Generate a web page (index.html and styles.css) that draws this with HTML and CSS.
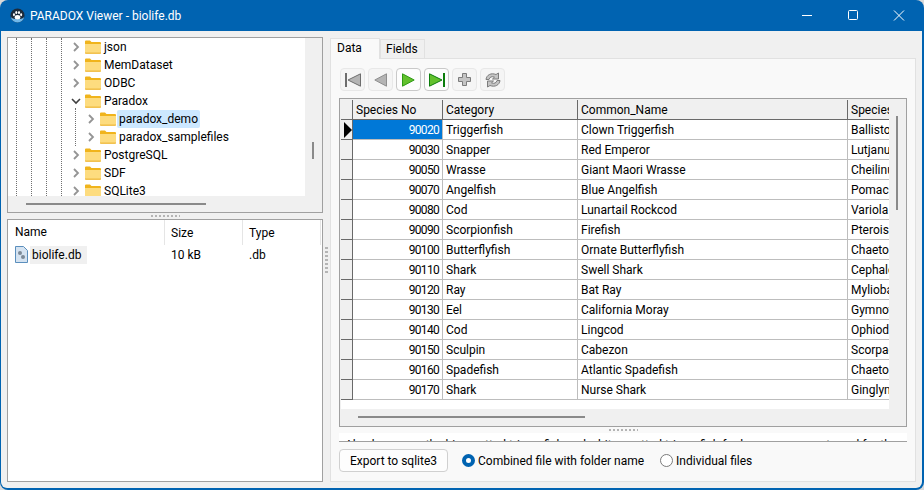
FILE: index.html
```html
<!DOCTYPE html>
<html>
<head>
<meta charset="utf-8">
<title>PARADOX Viewer - biolife.db</title>
<link rel="stylesheet" href="styles.css">
</head>
<body>
<svg class="defs" width="0" height="0">
	<symbol id="folder" viewBox="0 0 16 14">
		<path d="M0 1.500a1 1 0 0 1 1-1h4l1.500 1.500H15a1 1 0 0 1 1 1v9.500a1 1 0 0 1-1 1H1a1 1 0 0 1-1-1z" fill="#f0b41c"/>
		<path d="M0 4h16v8.500a1 1 0 0 1-1 1H1a1 1 0 0 1-1-1z" fill="#fddc7f"/>
		<path d="M0 12.500h16v.2a1 1 0 0 1-1 1H1a1 1 0 0 1-1-1z" fill="#efbb42"/>
	</symbol>
	<symbol id="right" viewBox="0 0 8 12"><path d="M2 2l4 4-4 4" fill="none" stroke="#949494" stroke-width="1.800"/></symbol>
	<symbol id="down" viewBox="0 0 10 12"><path d="M1 4l4 4 4-4" fill="none" stroke="#404040" stroke-width="1.600"/></symbol>
</svg>
<div class="window">
	<div class="titlebar">
		<svg class="appicon" width="15" height="15" viewBox="0 0 16 16">
			<circle cx="8" cy="8" r="7.500" fill="#1c2a3a"/>
			<path d="M1 9a7 6.500 0 0 0 14 0a7 3 0 0 1-14 0" fill="#6fb7ea"/>
			<ellipse cx="8" cy="9.800" rx="3" ry="2.400" fill="#fff"/>
			<ellipse cx="4.200" cy="7.200" rx="1.100" ry="1.500" fill="#fff"/>
			<ellipse cx="6.700" cy="4.900" rx="1.100" ry="1.600" fill="#fff"/>
			<ellipse cx="9.600" cy="4.900" rx="1.100" ry="1.600" fill="#fff"/>
			<ellipse cx="11.900" cy="7.200" rx="1.100" ry="1.500" fill="#fff"/>
		</svg>
		<span class="title">PARADOX Viewer - biolife.db</span>
		<div class="caption">
			<svg width="46" height="31" viewBox="0 0 46 31"><path d="M18 15.500h10" stroke="#fff"/></svg>
			<svg width="46" height="31" viewBox="0 0 46 31"><rect x="18.500" y="10.500" width="9" height="9" rx="1" fill="none" stroke="#fff"/></svg>
			<svg width="46" height="31" viewBox="0 0 46 31"><path d="M18 10.500l10 10M28 10.500l-10 10" stroke="#fff"/></svg>
		</div>
	</div>
	<div class="client">
		<div class="leftside">
			<div class="treebox">
				<div class="treeview">
					<div class="guides"><i></i><i></i><i></i><i></i><i></i></div>
					<div class="node"><svg class="chev"><use href="#right"/></svg><svg class="folder"><use href="#folder"/></svg><span>json</span></div>
					<div class="node"><svg class="chev"><use href="#right"/></svg><svg class="folder"><use href="#folder"/></svg><span>MemDataset</span></div>
					<div class="node"><svg class="chev"><use href="#right"/></svg><svg class="folder"><use href="#folder"/></svg><span>ODBC</span></div>
					<div class="node"><svg class="chev"><use href="#down"/></svg><svg class="folder"><use href="#folder"/></svg><span>Paradox</span></div>
					<div class="node sub"><svg class="chev"><use href="#right"/></svg><svg class="folder"><use href="#folder"/></svg><span class="picked">paradox_demo</span></div>
					<div class="node sub"><svg class="chev"><use href="#right"/></svg><svg class="folder"><use href="#folder"/></svg><span>paradox_samplefiles</span></div>
					<div class="node"><svg class="chev"><use href="#right"/></svg><svg class="folder"><use href="#folder"/></svg><span>PostgreSQL</span></div>
					<div class="node"><svg class="chev"><use href="#right"/></svg><svg class="folder"><use href="#folder"/></svg><span>SDF</span></div>
					<div class="node"><svg class="chev"><use href="#right"/></svg><svg class="folder"><use href="#folder"/></svg><span>SQLite3</span></div>
				</div>
				<div class="vbar tree-v"><b></b></div>
				<div class="hbar tree-h"><b></b></div>
			</div>
			<div class="grip-h"></div>
			<div class="listbox">
				<div class="listhead"><span class="c-name">Name</span><span class="c-size">Size</span><span class="c-type">Type</span></div>
				<div class="listrow">
					<div class="c-name"><svg width="13" height="17" viewBox="0 0 13 17"><path d="M.5.5h8l4 4v12H.5z" fill="#d5e3f1" stroke="#5b8fbd"/><circle cx="5" cy="7" r="2" fill="#7d8a97"/><circle cx="8" cy="11" r="2" fill="#7d8a97"/></svg><span class="shade">biolife.db</span></div>
					<div class="c-size">10 kB</div>
					<div class="c-type">.db</div>
				</div>
			</div>
		</div>
		<div class="grip-v"></div>
		<div class="rightside">
			<div class="tabs"><span class="tab on">Data</span><span class="tab">Fields</span></div>
			<div class="page">
				<div class="toolbar">
					<button class="tool"><svg width="16" height="14" viewBox="0 0 16 14"><path d="M0 0h2v14H0z" fill="#6d6d6d"/><path d="M15.500 .8v12.400L3 7z" fill="#b4b4b4" stroke="#6d6d6d"/></svg></button>
					<button class="tool"><svg width="13" height="14" viewBox="0 0 13 14"><path d="M12.500 .8v12.400L.8 7z" fill="#b4b4b4" stroke="#8e8e8e"/></svg></button>
					<button class="tool live"><svg width="13" height="14" viewBox="0 0 13 14"><path d="M.5 .8v12.400L12.200 7z" fill="#62c02c" stroke="#2e9a14"/></svg></button>
					<button class="tool live"><svg width="16" height="14" viewBox="0 0 16 14"><path d="M14 0h2v14h-2z" fill="#0c7d0c"/><path d="M.5 .8v12.400L13 7z" fill="#62c02c" stroke="#0c7d0c"/></svg></button>
					<button class="tool"><svg width="13" height="13" viewBox="0 0 13 13"><path d="M4.500 .5h4v4h4v4h-4v4h-4v-4h-4v-4h4z" fill="#c4c4c4" stroke="#7c7c7c"/></svg></button>
					<button class="tool"><svg width="16" height="16" viewBox="0 0 16 16"><path d="M1 7.500C1.500 3 6 .5 11 2.500L13.500 1v6h-6l2-1.800C7 4 4.500 5 4 7.500z" fill="#c4c4c4" stroke="#7c7c7c"/><path d="M15 8.500C14.500 13 10 15.500 5 13.500L2.500 15V9h6l-2 1.800c2.500 1.200 5 .2 5.500-2.300z" fill="#c4c4c4" stroke="#7c7c7c"/></svg></button>
				</div>
				<div class="gridbox">
					<div class="gridscroll">
						<table class="grid">
							<colgroup><col class="w-ind"><col class="w-no"><col class="w-cat"><col class="w-com"><col class="w-sp"></colgroup>
							<thead><tr><th></th><th>Species No</th><th>Category</th><th>Common_Name</th><th>Species Name</th></tr></thead>
							<tbody>
								<tr><td class="ind"><svg width="8" height="16" viewBox="0 0 8 16"><path d="M0 0l8 8-8 8z"/></svg></td><td class="num cur">90020</td><td>Triggerfish</td><td>Clown Triggerfish</td><td>Ballistoides conspicillum</td></tr>
								<tr><td class="ind"></td><td class="num">90030</td><td>Snapper</td><td>Red Emperor</td><td>Lutjanus sebae</td></tr>
								<tr><td class="ind"></td><td class="num">90050</td><td>Wrasse</td><td>Giant Maori Wrasse</td><td>Cheilinus undulatus</td></tr>
								<tr><td class="ind"></td><td class="num">90070</td><td>Angelfish</td><td>Blue Angelfish</td><td>Pomacanthus nauarchus</td></tr>
								<tr><td class="ind"></td><td class="num">90080</td><td>Cod</td><td>Lunartail Rockcod</td><td>Variola louti</td></tr>
								<tr><td class="ind"></td><td class="num">90090</td><td>Scorpionfish</td><td>Firefish</td><td>Pterois volitans</td></tr>
								<tr><td class="ind"></td><td class="num">90100</td><td>Butterflyfish</td><td>Ornate Butterflyfish</td><td>Chaetodon Ornatissimus</td></tr>
								<tr><td class="ind"></td><td class="num">90110</td><td>Shark</td><td>Swell Shark</td><td>Cephaloscyllium ventriosum</td></tr>
								<tr><td class="ind"></td><td class="num">90120</td><td>Ray</td><td>Bat Ray</td><td>Myliobatis californica</td></tr>
								<tr><td class="ind"></td><td class="num">90130</td><td>Eel</td><td>California Moray</td><td>Gymnothorax mordax</td></tr>
								<tr><td class="ind"></td><td class="num">90140</td><td>Cod</td><td>Lingcod</td><td>Ophiodon elongatus</td></tr>
								<tr><td class="ind"></td><td class="num">90150</td><td>Sculpin</td><td>Cabezon</td><td>Scorpaenichthys marmoratus</td></tr>
								<tr><td class="ind"></td><td class="num">90160</td><td>Spadefish</td><td>Atlantic Spadefish</td><td>Chaetodipterus faber</td></tr>
								<tr><td class="ind"></td><td class="num">90170</td><td>Shark</td><td>Nurse Shark</td><td>Ginglymostoma cirratum</td></tr>
							</tbody>
						</table>
					</div>
					<div class="vbar grid-v"><b></b></div>
					<div class="hbar grid-h"><b></b></div>
				</div>
				<div class="grip-h small"></div>
				<div class="memo"><p>Also known as the big-spotted triggerfish and white-spotted triggerfish for large cream spots and for the wide mouth of this fish</p></div>
				<div class="exportbar">
					<button class="export">Export to sqlite3</button>
					<label class="radio first"><i class="dot on"></i>Combined file with folder name</label>
					<label class="radio"><i class="dot"></i>Individual files</label>
				</div>
			</div>
		</div>
	</div>
</div>
</body>
</html>
```

FILE: styles.css
```css
html, body{
	margin: 0;
	height: 100%;
	overflow: hidden;
}
body{
	font-family: Roboto, "Open Sans", sans-serif;
	font-size: 12px;
	color: #000;
	background: #d9d9d9;
}
.defs{
	display: block;
	height: 0;
}
.window{
	width: 924px;
	height: 490px;
	display: flex;
	flex-direction: column;
	box-sizing: border-box;
	padding: 0 2px 2px 1px;
	background: #0063b1;
	border-radius: 8px;
}
.titlebar{
	height: 31px;
	flex: none;
	display: flex;
	align-items: center;
	padding-left: 9px;
	color: #fff;
}
.appicon{
	margin-right: 5px;
}
.title{
	flex: 1;
}
.caption{
	display: flex;
}
.caption svg{
	display: block;
}
.client{
	flex: 1;
	min-height: 0;
	display: flex;
	background: #f0f0f0;
	padding: 6px;
	border-radius: 0 0 6px 6px;
}
.leftside{
	width: 316px;
	flex: none;
	display: flex;
	flex-direction: column;
}
.treebox{
	height: 176px;
	flex: none;
	box-sizing: border-box;
	border: 1px solid #a0a0a0;
	background: #f0f0f0;
	position: relative;
	overflow: hidden;
}
.treeview{
	width: 297px;
	height: 158px;
	background: #fff;
	overflow: hidden;
	position: relative;
}
.guides i{
	position: absolute;
	top: 0;
	height: 158px;
	border-left: 1px dotted #707070;
}
.guides i:nth-child(1){ left: 8px; }
.guides i:nth-child(2){ left: 23px; }
.guides i:nth-child(3){ left: 38px; }
.guides i:nth-child(4){ left: 53px; }
.guides i:nth-child(5){
	left: 67px;
	top: 70px;
	height: 38px;
}
.node{
	height: 18px;
	display: flex;
	align-items: center;
	padding-left: 63px;
	white-space: nowrap;
	position: relative;
}
.node.sub{
	padding-left: 78px;
}
.chev{
	width: 10px;
	height: 12px;
	margin-right: 4px;
	flex: none;
}
.folder{
	width: 16px;
	height: 14px;
	margin-right: 1px;
	flex: none;
}
.node span{
	padding: 0 2px;
	line-height: 18px;
}
.picked{
	background: #cce8ff;
	border-radius: 2px;
}
.vbar, .hbar{
	position: absolute;
	background: #f0f0f0;
}
.vbar b, .hbar b{
	display: block;
	background: #8a8a8a;
	position: absolute;
}
.tree-v{
	right: 0;
	top: 0;
	width: 17px;
	bottom: 0;
}
.tree-v b{
	left: 7px;
	top: 104px;
	width: 2px;
	height: 17px;
}
.tree-h{
	left: 0;
	bottom: 0;
	height: 16px;
	width: 297px;
}
.tree-h b{
	left: 18px;
	top: 7px;
	width: 180px;
	height: 2px;
}
.grip-h{
	height: 6px;
	flex: none;
	display: flex;
	align-items: center;
	justify-content: center;
}
.grip-h::before{
	content: "";
	width: 29px;
	height: 2px;
	background: repeating-linear-gradient(90deg, #b4b4b4 0 2px, transparent 2px 4px);
}
.listbox{
	flex: 1;
	min-height: 0;
	box-sizing: border-box;
	border: 1px solid #a0a0a0;
	background: #fff;
}
.listhead{
	display: flex;
	height: 25px;
	align-items: center;
}
.listhead span{
	box-sizing: border-box;
	height: 25px;
	line-height: 27px;
	border-right: 1px solid #e5e5e5;
}
.c-name{
	width: 157px;
	box-sizing: border-box;
	padding-left: 7px;
	display: flex;
	align-items: center;
}
.c-size{
	width: 78px;
	box-sizing: border-box;
	padding-left: 6px;
}
.c-type{
	width: 78px;
	box-sizing: border-box;
	padding-left: 6px;
}
.listrow{
	display: flex;
	align-items: center;
	height: 19px;
}
.shade{
	background: #f0f0f0;
	padding: 0 6px 0 2px;
	margin-left: 2px;
	line-height: 18px;
}
.grip-v{
	width: 7px;
	flex: none;
	display: flex;
	align-items: center;
	justify-content: center;
}
.grip-v::before{
	content: "";
	width: 3px;
	height: 26px;
	background: repeating-linear-gradient(0deg, #b4b4b4 0 2px, transparent 2px 4px);
}
.rightside{
	flex: 1;
	display: flex;
	flex-direction: column;
	min-width: 0;
}
.tabs{
	height: 21px;
	flex: none;
	display: flex;
	align-items: flex-end;
	position: relative;
	z-index: 1;
}
.tab{
	height: 19px;
	line-height: 19px;
	padding: 0 0 0 5px;
	width: 45px;
	box-sizing: border-box;
	background: #f0f0f0;
	border: 1px solid #e1e1e1;
	border-bottom: 0;
}
.tab.on{
	height: 21px;
	line-height: 19px;
	padding-left: 6px;
	width: 50px;
	background: #f9f9f9;
	margin-bottom: -1px;
}
.page{
	flex: 1;
	min-height: 0;
	box-sizing: border-box;
	border: 1px solid #e1e1e1;
	background: #f9f9f9;
	padding: 9px 8px 0 8px;
	display: flex;
	flex-direction: column;
}
.toolbar{
	display: flex;
	gap: 3px;
	height: 23px;
	flex: none;
	margin-left: 1px;
}
.tool{
	width: 25px;
	height: 23px;
	padding: 0;
	box-sizing: border-box;
	border: 1px solid #e8e8e8;
	border-radius: 4px;
	background: #f5f5f5;
	display: flex;
	align-items: center;
	justify-content: center;
}
.tool.live{
	background: #fdfdfd;
	border-color: #c9c9c9;
}
.gridbox{
	height: 329px;
	flex: none;
	margin-top: 7px;
	box-sizing: border-box;
	border: 1px solid #a0a0a0;
	background: #f0f0f0;
	position: relative;
	padding: 1px 0 0 1px;
}
.gridscroll{
	width: 548px;
	height: 309px;
	overflow: hidden;
	background: #fff;
}
.grid{
	border-collapse: separate;
	border-spacing: 0;
	table-layout: fixed;
	width: 660px;
}
.w-ind{ width: 12px; }
.w-no{ width: 90px; }
.w-cat{ width: 135px; }
.w-com{ width: 270px; }
.w-sp{ width: 153px; }
.grid th{
	height: 20px;
	box-sizing: border-box;
	background: #f0f0f0;
	font-weight: normal;
	text-align: left;
	padding: 1px 3px 0;
	border-right: 1px solid #696969;
	border-bottom: 1px solid #696969;
	white-space: nowrap;
	overflow: hidden;
}
.grid td{
	height: 20px;
	box-sizing: border-box;
	padding: 1px 3px 0;
	border-right: 1px solid #bdbdbd;
	border-bottom: 1px solid #bdbdbd;
	white-space: nowrap;
	overflow: hidden;
}
.grid td.ind{
	background: #f0f0f0;
	border-right: 1px solid #696969;
	border-bottom: 1px solid #696969;
	padding: 0 0 0 3px;
	line-height: 0;
}
.grid td.num{
	text-align: right;
	letter-spacing: -0.7px;
}
.grid td.cur{
	background: #0078d7;
	color: #fff;
}
.grid-v{
	right: 0;
	top: 0;
	bottom: 0;
	width: 17px;
}
.grid-v b{
	left: 7px;
	top: 17px;
	width: 2px;
	height: 94px;
}
.grid-h{
	left: 1px;
	bottom: 0;
	height: 17px;
	width: 548px;
}
.grid-h b{
	left: 17px;
	top: 7px;
	width: 227px;
	height: 2px;
}
.memo{
	height: 9px;
	flex: none;
	box-sizing: border-box;
	background: #fff;
	border-bottom: 1px solid #a0a0a0;
	overflow: hidden;
}
.memo p{
	margin: 5px 0 0 6px;
	line-height: 14px;
	white-space: nowrap;
}
.exportbar{
	display: flex;
	align-items: center;
	height: 23px;
	margin-top: 7px;
	flex: none;
}
.export{
	width: 109px;
	height: 23px;
	padding: 0;
	font: inherit;
	background: #fdfdfd;
	border: 1px solid #d0d0d0;
	border-radius: 4px;
}
.radio{
	display: flex;
	align-items: center;
	gap: 3px;
	margin-left: 16px;
}
.radio.first{
	margin-left: 14px;
}
.dot{
	width: 13px;
	height: 13px;
	box-sizing: border-box;
	border: 1px solid #7a7a7a;
	border-radius: 50%;
	background: #fff;
	display: block;
}
.dot.on{
	border: 4px solid #0063b1;
}
```
